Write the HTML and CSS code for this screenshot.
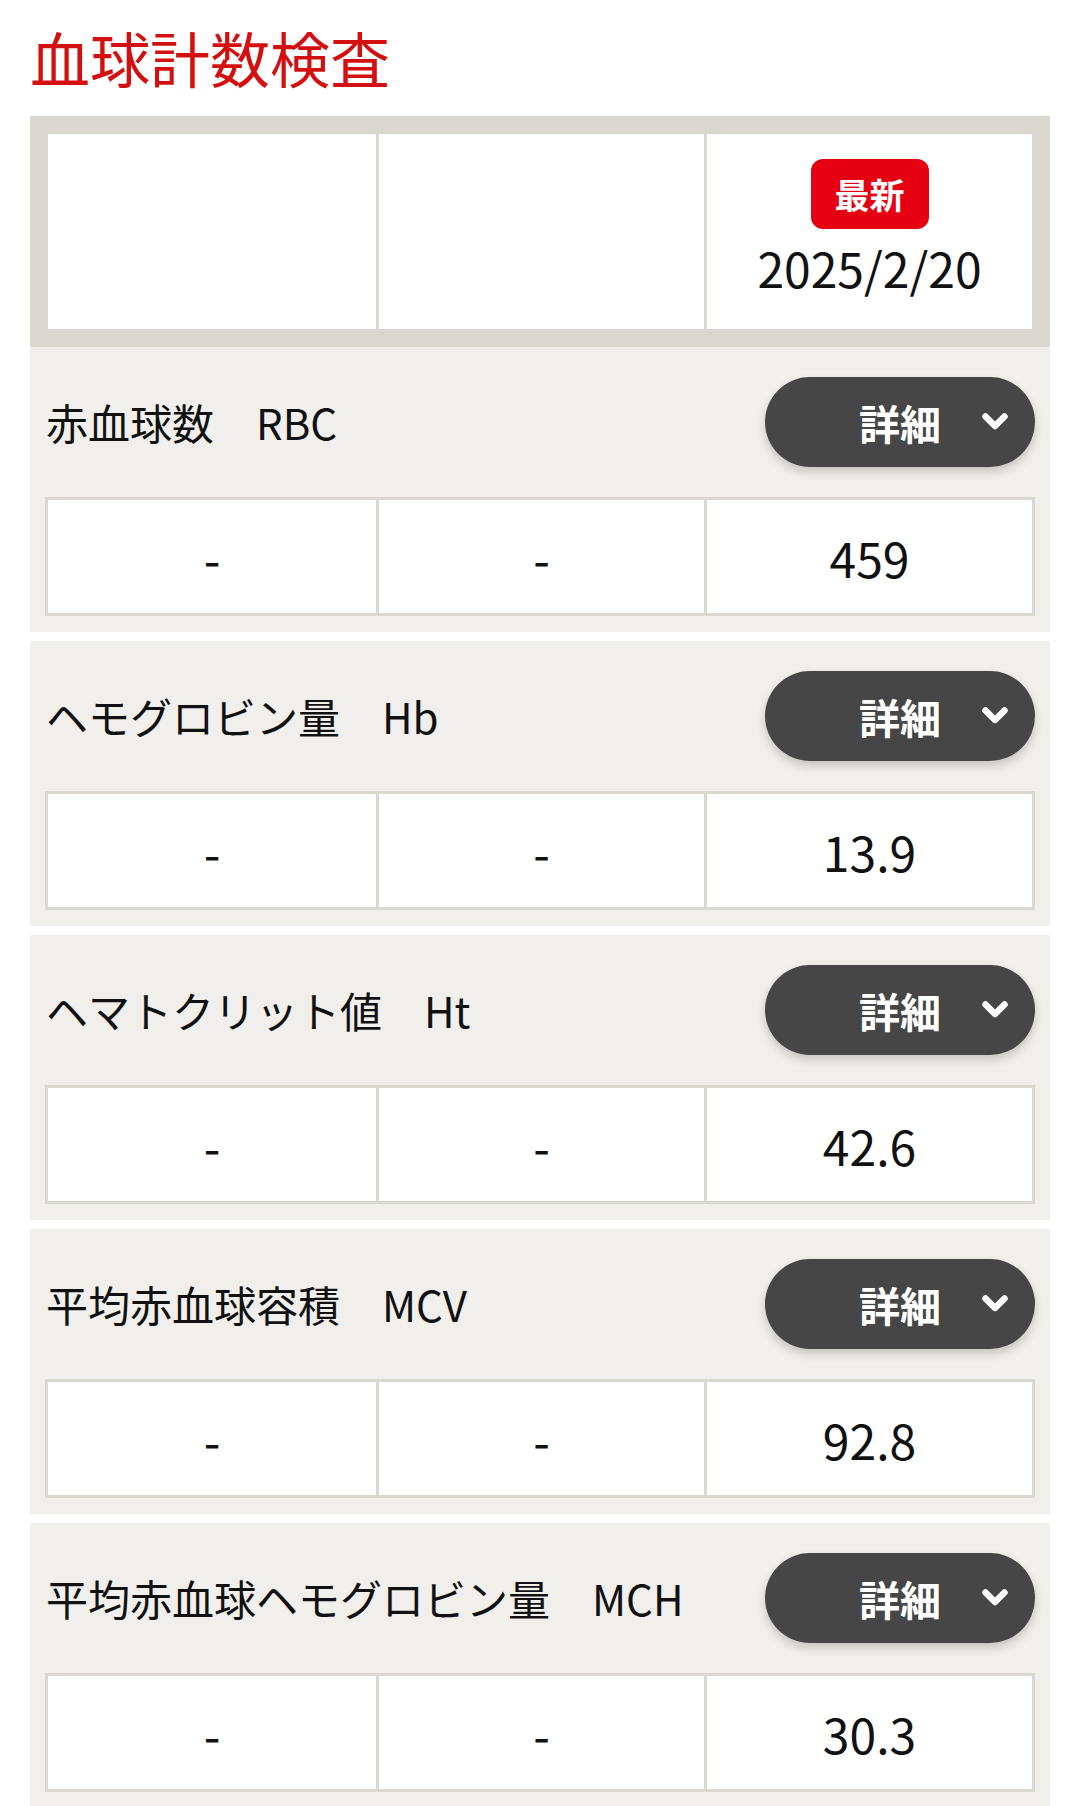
FILE: index.html
```html
<!DOCTYPE html>
<html lang="ja">
<head>
    <meta charset="UTF-8">
    <meta name="viewport" content="width=device-width, initial-scale=1.0">
    <title>血球計数検査</title>
    <link rel="stylesheet" href="styles.css">
</head>
<body>

    <main class="page">
        <h1 class="page-title">血球計数検査</h1>

        <!-- 日付ヘッダー -->
        <div class="date-head">
            <div class="date-cell"></div>
            <div class="date-cell"></div>
            <div class="date-cell">
                <span class="badge">最新</span>
                <span class="date">2025/2/20</span>
            </div>
        </div>

        <section class="item">
            <div class="item-head">
                <h2 class="item-name">赤血球数　RBC</h2>
                <button class="detail-btn"><span class="label">詳細</span><svg class="chev" viewBox="0 0 26 18"><polyline points="3.5,3.5 13,13 22.5,3.5" /></svg></button>
            </div>
            <div class="values">
                <div class="val">-</div>
                <div class="val">-</div>
                <div class="val">459</div>
            </div>
        </section>

        <section class="item">
            <div class="item-head">
                <h2 class="item-name">ヘモグロビン量　Hb</h2>
                <button class="detail-btn"><span class="label">詳細</span><svg class="chev" viewBox="0 0 26 18"><polyline points="3.5,3.5 13,13 22.5,3.5" /></svg></button>
            </div>
            <div class="values">
                <div class="val">-</div>
                <div class="val">-</div>
                <div class="val">13.9</div>
            </div>
        </section>

        <section class="item">
            <div class="item-head">
                <h2 class="item-name">ヘマトクリット値　Ht</h2>
                <button class="detail-btn"><span class="label">詳細</span><svg class="chev" viewBox="0 0 26 18"><polyline points="3.5,3.5 13,13 22.5,3.5" /></svg></button>
            </div>
            <div class="values">
                <div class="val">-</div>
                <div class="val">-</div>
                <div class="val">42.6</div>
            </div>
        </section>

        <section class="item">
            <div class="item-head">
                <h2 class="item-name">平均赤血球容積　MCV</h2>
                <button class="detail-btn"><span class="label">詳細</span><svg class="chev" viewBox="0 0 26 18"><polyline points="3.5,3.5 13,13 22.5,3.5" /></svg></button>
            </div>
            <div class="values">
                <div class="val">-</div>
                <div class="val">-</div>
                <div class="val">92.8</div>
            </div>
        </section>

        <section class="item">
            <div class="item-head">
                <h2 class="item-name">平均赤血球ヘモグロビン量　MCH</h2>
                <button class="detail-btn"><span class="label">詳細</span><svg class="chev" viewBox="0 0 26 18"><polyline points="3.5,3.5 13,13 22.5,3.5" /></svg></button>
            </div>
            <div class="values">
                <div class="val">-</div>
                <div class="val">-</div>
                <div class="val">30.3</div>
            </div>
        </section>
    </main>

</body>
</html>
```

FILE: styles.css
```css
* {
    margin: 0;
    padding: 0;
    box-sizing: border-box;
}

body {
    font-family: "Noto Sans CJK JP", "Noto Sans", sans-serif;
    background-color: #fff;
    color: #111;
}

.page {
    padding: 12px 30px 0;
}

.page-title {
    font-size: 60px;
    font-weight: 400;
    line-height: 90px;
    color: #d3100f;
    margin-bottom: 14px;
}

/* date header */
.date-head {
    display: grid;
    grid-template-columns: 328px 1fr 1fr;
    gap: 3px;
    background: #d9d7cf;
    border: 18px solid #d9d7cf;
}

.date-cell {
    background: #fff;
    height: 195px;
    padding-bottom: 7px;
    display: flex;
    flex-direction: column;
    align-items: center;
    justify-content: center;
}

.badge {
    background: #e50012;
    color: #fff;
    font-size: 35px;
    font-weight: 700;
    line-height: 70px;
    width: 118px;
    text-align: center;
    border-radius: 12px;
}

.date {
    font-size: 48px;
    line-height: 60px;
    margin-top: 8px;
}

/* items */
.item {
    background: #f0efeb;
    padding: 30px 15px 16px;
    margin-bottom: 9px;
}

.item-head {
    display: flex;
    justify-content: space-between;
    align-items: center;
    margin-bottom: 30px;
}

.item-name {
    font-size: 42px;
    font-weight: 400;
    line-height: 1.2;
    padding-left: 1px;
}

.detail-btn {
    display: grid;
    grid-template-columns: 1fr auto 1fr;
    align-items: center;
    width: 270px;
    height: 90px;
    border: none;
    border-radius: 45px;
    background: #464646;
    color: #fff;
    font-family: inherit;
    font-size: 41px;
    font-weight: 700;
    box-shadow: 0 5px 10px rgba(0, 0, 0, 0.18);
    cursor: pointer;
}

.detail-btn .label {
    grid-column: 2;
    line-height: 1;
}

.detail-btn .chev {
    grid-column: 3;
    justify-self: end;
    width: 26px;
    height: 18px;
    margin-right: 27px;
    fill: none;
    stroke: #fff;
    stroke-width: 6.5;
    stroke-linecap: round;
    stroke-linejoin: round;
}

.values {
    display: grid;
    grid-template-columns: 328px 1fr 1fr;
    gap: 3px;
    background: #dad8d1;
    border: 3px solid #dad8d1;
}

.val {
    background: #fff;
    height: 113px;
    display: flex;
    align-items: center;
    justify-content: center;
    font-size: 48px;
}
```
